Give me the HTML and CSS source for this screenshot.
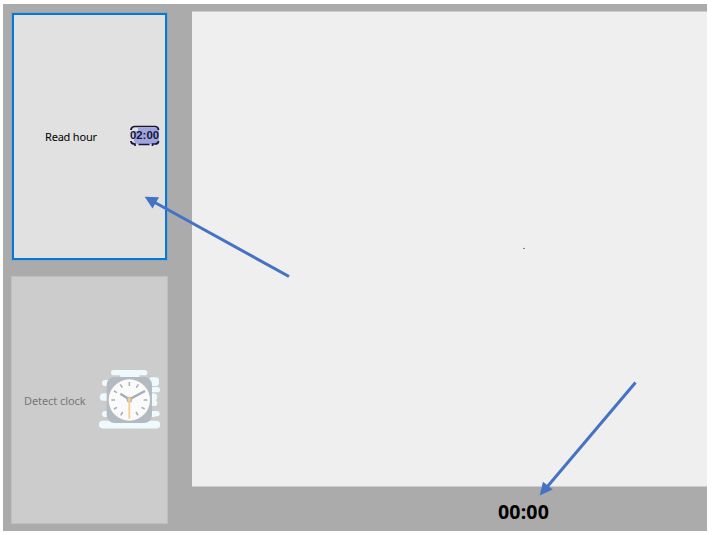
FILE: index.html
```html
<!DOCTYPE html>
<html lang="en">
<head>
<meta charset="utf-8">
<title>Clock reader</title>
<link rel="stylesheet" href="styles.css">
</head>
<body>
<main class="window">
  <aside class="sidebar">
    <button class="action action-focused">
      <span class="label label-read">Read hour</span>
      <svg class="icon-digital" viewBox="0 0 32 24" width="32" height="24">
        <path d="M4 7H9V4H27Q30 4 30 7V17Q30 20 27 20H10Q5 20 5 16Z" fill="#a0a4dc"/>
        <path d="M2 6V5.500Q2.500 2.500 6 2.500H26Q29 2.500 29.500 5.500V6M2 17V17.500Q2.500 20 6 20V22M29.500 17V17.500Q29 20 26 20H23.500V22M9.500 20.500H20.500" fill="none" stroke="#14163c" stroke-width="1.700"/>
        <text class="digits" x="1" y="15" textLength="29" lengthAdjust="spacingAndGlyphs">02:00</text>
      </svg>
    </button>
    <button class="action action-disabled" disabled>
      <span class="label label-detect">Detect clock</span>
      <svg class="icon-clock" viewBox="27 27 186 182" width="62" height="60.700">
        <g fill="none" stroke="#effafc" stroke-linecap="round">
          <path d="M71 38H164" stroke-width="16"/>
          <path d="M95 48H144" stroke-width="10"/>
          <path d="M45 69H198M45 162H190M190 129H193" stroke-width="18"/>
          <path d="M41 111H190" stroke-width="23"/>
          <path d="M185 60H199M190 89H202M190 161H201" stroke-width="16"/>
          <path d="M38 194H199" stroke-width="23"/>
        </g>
        <rect x="50" y="51" width="136" height="138" rx="24" fill="#b4bac1"/>
        <circle cx="118" cy="120" r="62" fill="#fafafa"/>
        <g stroke="#a6adb6" stroke-width="4.500">
          <path d="M118 66V78M64 120H75M161 120H172M91 73L97 83M145 73L139 83M72 93L81 98M72 147L81 142M92 166L98 156M144 166L138 156M164 147L155 142"/>
          <path d="M91 101L118 118L165 93" fill="none" stroke-width="7"/>
        </g>
        <circle cx="118" cy="119" r="8.500" fill="#b4b5b5"/>
        <path d="M118 112V176" stroke="#f8cd91" stroke-width="5.500"/>
        <circle cx="118" cy="119" r="4.500" fill="#f8cd91"/>
      </svg>
    </button>
  </aside>
  <section class="content">
    <div class="viewer">.</div>
    <output class="time">00:00</output>
  </section>
</main>
<svg class="arrows" viewBox="0 0 712 535" width="712" height="535">
  <g stroke="#4472c4" stroke-width="3">
    <path d="M289 276.500L154 202"/>
    <path d="M635.500 382.500L547 487"/>
  </g>
  <g fill="#4472c4">
    <path d="M144.700 196.800L159 197.200L152.500 208.500Z"/>
    <path d="M539.700 495.500L543 481.800L552.700 489.500Z"/>
  </g>
</svg>
</body>
</html>
```
FILE: styles.css
```css
body {
  margin: 0;
  padding: 4px 0 0 3px;
  width: 712px;
  height: 535px;
  box-sizing: border-box;
  overflow: hidden;
  background: #fff;
  font-family: "Noto Sans", "Open Sans", sans-serif;
}

.window {
  display: flex;
  gap: 24px;
  width: 704px;
  height: 527px;
  padding: 7px 0 7px 8px;
  box-sizing: border-box;
  background: #ababab;
}

.sidebar {
  display: flex;
  flex-direction: column;
  gap: 15px;
  width: 157px;
  padding-top: 1px;
}

.action {
  flex: none;
  display: flex;
  align-items: center;
  box-sizing: border-box;
  width: 157px;
  height: 248px;
  margin: 0;
  padding: 0;
  font: 11px "Noto Sans", "Open Sans", sans-serif;
}

.action-focused {
  border: 2px solid #0878d7;
  outline: 1px solid #94a5b4;
  outline-offset: 0;
  width: 155px;
  height: 247px;
  margin: 1px;
  background: #e1e1e1;
  color: #000;
}

.action-disabled {
  border: 1px solid #bfbfbf;
  background: #ccc;
  color: #777;
}

.label {
  flex: none;
  white-space: nowrap;
  text-align: left;
  letter-spacing: -0.2px;
}

.label-read {
  width: 84px;
  margin-left: 31px;
}

.label-detect {
  width: 75px;
  margin-left: 12px;
  letter-spacing: -0.08px;
}

.icon-digital,
.icon-clock {
  flex: none;
  margin-bottom: 2px;
}

.digits {
  font: bold 10px "Liberation Sans", sans-serif;
  fill: #14163c;
}

.content {
  flex: 1;
  display: flex;
  flex-direction: column;
  align-items: center;
}

.viewer {
  flex: none;
  display: flex;
  align-items: center;
  justify-content: center;
  box-sizing: border-box;
  width: 515px;
  height: 476px;
  padding: 0 0 8px 149px;
  border-top: 1px solid #cdcdcd;
  border-bottom: 1px solid #cdcdcd;
  background: #efefef;
  font-size: 9px;
}

.time {
  margin: 11px 0 0 148px;
  font: bold 19.5px/28px "Noto Sans", "Open Sans", sans-serif;
  letter-spacing: 0.2px;
  color: #000;
}

.arrows {
  position: absolute;
  top: 0;
  left: 0;
  pointer-events: none;
}
```
